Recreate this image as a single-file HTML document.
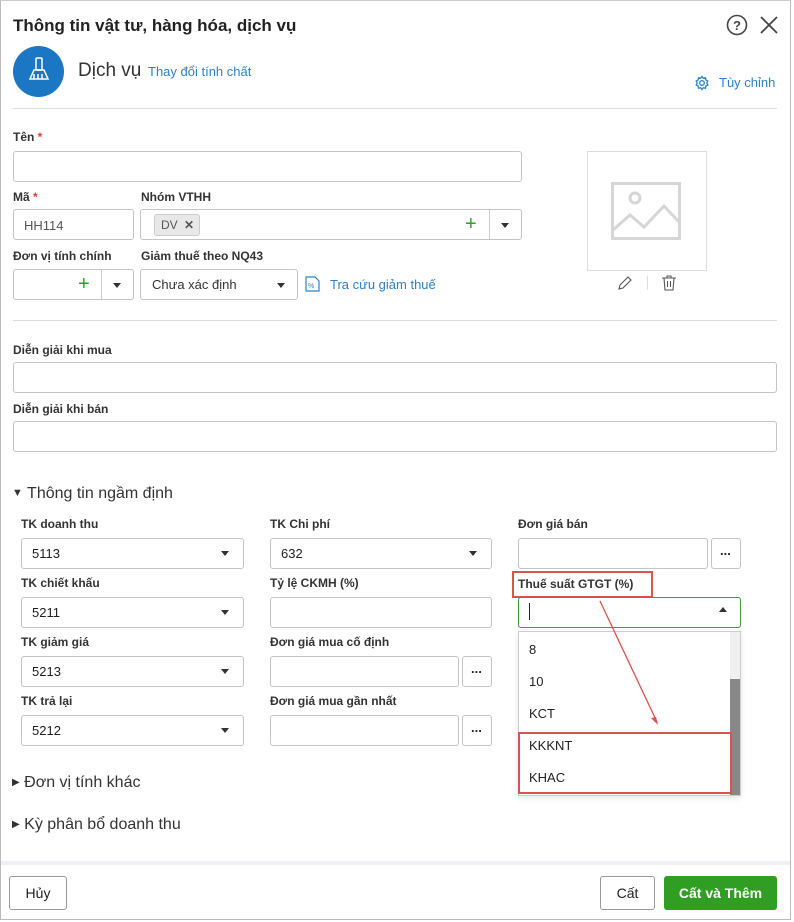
<!DOCTYPE html>
<html><head><meta charset="utf-8"><style>
*{box-sizing:border-box;margin:0;padding:0}
body{width:794px;height:922px;background:#fff;font-family:"Liberation Sans",sans-serif;color:#212121;position:relative;overflow:hidden}
.a{position:absolute}
.lb{position:absolute;font-size:12px;font-weight:bold;color:#333;white-space:nowrap}
.in{position:absolute;border:1px solid #c4c4c4;border-radius:3px;background:#fff;height:31px}
.tx{position:absolute;font-size:13px;white-space:nowrap}
.caret{position:absolute;width:0;height:0;border-left:4px solid transparent;border-right:4px solid transparent;border-top:5px solid #333}
.hr{position:absolute;height:1px;background:#ddd}
.btn{position:absolute;border:1px solid #999;border-radius:3px;background:#fff;font-size:14px;text-align:center}
.req{color:#e53935}
</style></head><body>
<div class="a" style="left:0;top:0;width:791px;height:920px;border:1px solid #bbb;border-top-color:#ccc"></div>
<div class="tx" style="left:13px;top:16px;font-size:17px;font-weight:bold;color:#222">Thông tin vật tư, hàng hóa, dịch vụ</div>
<svg class="a" style="left:726px;top:14px" width="22" height="22"><circle cx="11" cy="11" r="9.5" fill="none" stroke="#444" stroke-width="1.6"/><text x="11" y="16" text-anchor="middle" font-size="13" font-weight="bold" fill="#444" font-family="Liberation Sans">?</text></svg>
<svg class="a" style="left:759px;top:15px" width="20" height="20"><path d="M2 2L18 18M18 2L2 18" stroke="#444" stroke-width="1.8"/></svg>
<div class="a" style="left:13px;top:46px;width:51px;height:51px;border-radius:50%;background:#1b76c4"></div>
<svg class="a" style="left:26px;top:56px" width="26" height="30" fill="none" stroke="#fff" stroke-width="1.5"><rect x="10" y="2" width="6" height="12" rx="1"/><path d="M8 14h10l4 9H4z"/><path d="M8 18v5M12 18v5M16 18v5"/></svg>
<div class="tx" style="left:78px;top:60px;font-size:19px;color:#333">Dịch vụ</div>
<div class="tx" style="left:148px;top:64px;color:#2b82c8">Thay đổi tính chất</div>
<svg class="a" style="left:694px;top:75px" width="16" height="16" fill="none" stroke="#2b82c8" stroke-width="1.3"><circle cx="8" cy="8" r="2.3"/><path d="M8 1.5l1.3 1.8 2.2-.5.3 2.2 2 1-1 2 1 2-2 1-.3 2.2-2.2-.5L8 14.5l-1.3-1.8-2.2.5-.3-2.2-2-1 1-2-1-2 2-1 .3-2.2 2.2.5z"/></svg>
<div class="tx" style="left:719px;top:75px;color:#2b82c8">Tùy chỉnh</div>
<div class="hr" style="left:13px;top:108px;width:764px"></div>

<div class="lb" style="left:13px;top:130px">Tên <span class="req">*</span></div>
<div class="in" style="left:13px;top:151px;width:509px"></div>
<div class="lb" style="left:13px;top:190px">Mã <span class="req">*</span></div>
<div class="in" style="left:13px;top:209px;width:121px"></div>
<div class="tx" style="left:24px;top:218px;color:#555">HH114</div>
<div class="lb" style="left:141px;top:190px">Nhóm VTHH</div>
<div class="in" style="left:140px;top:209px;width:382px"></div>
<div class="a" style="left:154px;top:214px;width:46px;height:22px;background:#e8e8e8;border:1px solid #ccc;border-radius:3px"></div>
<div class="tx" style="left:161px;top:218px;font-size:12px;color:#555">DV <b style="margin-left:3px">✕</b></div>
<div class="tx" style="left:465px;top:213px;font-size:20px;color:#2e9e2e">+</div>
<div class="a" style="left:489px;top:210px;width:1px;height:29px;background:#ccc"></div>
<div class="caret" style="left:501px;top:223px"></div>
<div class="lb" style="left:13px;top:249px">Đơn vị tính chính</div>
<div class="in" style="left:13px;top:269px;width:121px"></div>
<div class="tx" style="left:78px;top:273px;font-size:20px;color:#2e9e2e">+</div>
<div class="a" style="left:101px;top:270px;width:1px;height:29px;background:#ccc"></div>
<div class="caret" style="left:113px;top:283px"></div>
<div class="lb" style="left:141px;top:249px">Giảm thuế theo NQ43</div>
<div class="in" style="left:140px;top:269px;width:158px"></div>
<div class="tx" style="left:152px;top:277px;color:#333">Chưa xác định</div>
<div class="caret" style="left:277px;top:283px"></div>
<svg class="a" style="left:305px;top:276px" width="15" height="16" fill="none" stroke="#2b82c8" stroke-width="1.2"><path d="M1 1h9l4 4v10H1z"/><text x="3" y="12" font-size="7" fill="#2b82c8" stroke="none">%</text></svg>
<div class="tx" style="left:330px;top:277px;color:#2b82c8">Tra cứu giảm thuế</div>

<div class="a" style="left:587px;top:151px;width:120px;height:120px;border:1px solid #ddd"></div>
<svg class="a" style="left:611px;top:182px" width="70" height="58" fill="none" stroke="#d6d6d6" stroke-width="3"><rect x="1.5" y="1.5" width="67" height="55"/><circle cx="24" cy="16" r="5"/><path d="M2 48l17-15 14 12 20-21 16 17"/></svg>
<svg class="a" style="left:617px;top:275px" width="16" height="16" fill="none" stroke="#555" stroke-width="1.1"><path d="M2 14l1-4 8-8 3 3-8 8z"/></svg>
<div class="a" style="left:647px;top:276px;width:1px;height:14px;background:#ddd"></div>
<svg class="a" style="left:661px;top:275px" width="16" height="16" fill="none" stroke="#555" stroke-width="1.1"><path d="M1 3h14M6 3V1h4v2M3 3l1 12h8l1-12M6.5 6v6M9.5 6v6"/></svg>
<div class="hr" style="left:13px;top:320px;width:764px"></div>

<div class="lb" style="left:13px;top:343px">Diễn giải khi mua</div>
<div class="in" style="left:13px;top:362px;width:764px"></div>
<div class="lb" style="left:13px;top:402px">Diễn giải khi bán</div>
<div class="in" style="left:13px;top:421px;width:764px"></div>

<div class="tx" style="left:12px;top:485px;font-size:16px;color:#333"><span style="font-size:11px;vertical-align:2px">▼</span> Thông tin ngầm định</div>

<div class="lb" style="left:21px;top:517px">TK doanh thu</div>
<div class="in" style="left:21px;top:538px;width:223px"></div><div class="tx" style="left:32px;top:546px">5113</div><div class="caret" style="left:221px;top:551px"></div>
<div class="lb" style="left:21px;top:576px">TK chiết khấu</div>
<div class="in" style="left:21px;top:597px;width:223px"></div><div class="tx" style="left:32px;top:605px">5211</div><div class="caret" style="left:221px;top:610px"></div>
<div class="lb" style="left:21px;top:635px">TK giảm giá</div>
<div class="in" style="left:21px;top:656px;width:223px"></div><div class="tx" style="left:32px;top:664px">5213</div><div class="caret" style="left:221px;top:669px"></div>
<div class="lb" style="left:21px;top:694px">TK trả lại</div>
<div class="in" style="left:21px;top:715px;width:223px"></div><div class="tx" style="left:32px;top:723px">5212</div><div class="caret" style="left:221px;top:728px"></div>

<div class="lb" style="left:270px;top:517px">TK Chi phí</div>
<div class="in" style="left:270px;top:538px;width:222px"></div><div class="tx" style="left:281px;top:546px">632</div><div class="caret" style="left:469px;top:551px"></div>
<div class="lb" style="left:270px;top:576px">Tỷ lệ CKMH (%)</div>
<div class="in" style="left:270px;top:597px;width:222px"></div>
<div class="lb" style="left:270px;top:635px">Đơn giá mua cố định</div>
<div class="in" style="left:270px;top:656px;width:189px"></div><div class="in" style="left:462px;top:656px;width:30px"></div><div class="tx" style="left:471px;top:661px;font-weight:bold">...</div>
<div class="lb" style="left:270px;top:694px">Đơn giá mua gần nhất</div>
<div class="in" style="left:270px;top:715px;width:189px"></div><div class="in" style="left:462px;top:715px;width:30px"></div><div class="tx" style="left:471px;top:720px;font-weight:bold">...</div>

<div class="lb" style="left:518px;top:517px">Đơn giá bán</div>
<div class="in" style="left:518px;top:538px;width:190px"></div><div class="in" style="left:711px;top:538px;width:30px"></div><div class="tx" style="left:720px;top:543px;font-weight:bold">...</div>
<div class="lb" style="left:518px;top:577px">Thuế suất GTGT (%)</div>
<div class="a" style="left:512px;top:571px;width:141px;height:27px;border:2px solid #d9534f"></div>
<div class="in" style="left:518px;top:597px;width:223px;border-color:#3d9a3d"></div>
<div class="a" style="left:529px;top:603px;width:1px;height:17px;background:#222"></div>
<div class="a" style="left:719px;top:607px;border-left:4px solid transparent;border-right:4px solid transparent;border-bottom:5px solid #333"></div>

<div class="a" style="left:518px;top:631px;width:223px;height:165px;border:1px solid #ccc;background:#fff;box-shadow:0 2px 6px rgba(0,0,0,.1)"></div>
<div class="a" style="left:730px;top:632px;width:10px;height:163px;background:#f0f0f0"></div>
<div class="a" style="left:730px;top:679px;width:10px;height:116px;background:#888"></div>
<div class="tx" style="left:529px;top:642px">8</div>
<div class="tx" style="left:529px;top:674px">10</div>
<div class="tx" style="left:529px;top:706px">KCT</div>
<div class="tx" style="left:529px;top:738px">KKKNT</div>
<div class="tx" style="left:529px;top:770px">KHAC</div>
<div class="a" style="left:518px;top:732px;width:214px;height:62px;border:2px solid #d9534f"></div>
<svg class="a" style="left:595px;top:598px" width="70" height="130"><path d="M5 3L62 124" stroke="#d9534f" stroke-width="1.3"/><path d="M63 127l-7-7 5-1z" fill="#d9534f"/></svg>

<div class="tx" style="left:12px;top:774px;font-size:16px;color:#333"><span style="font-size:10px;vertical-align:2px">▶</span> Đơn vị tính khác</div>
<div class="tx" style="left:12px;top:816px;font-size:16px;color:#333"><span style="font-size:10px;vertical-align:2px">▶</span> Kỳ phân bổ doanh thu</div>

<div class="a" style="left:1px;top:861px;width:789px;height:4px;background:#eef0f3"></div>
<div class="btn" style="left:9px;top:876px;width:58px;height:34px;line-height:32px">Hủy</div>
<div class="btn" style="left:600px;top:876px;width:55px;height:34px;line-height:32px">Cất</div>
<div class="btn" style="left:664px;top:876px;width:113px;height:34px;line-height:32px;background:#2f9e22;border-color:#2f9e22;color:#fff;font-weight:bold">Cất và Thêm</div>
</body></html>
